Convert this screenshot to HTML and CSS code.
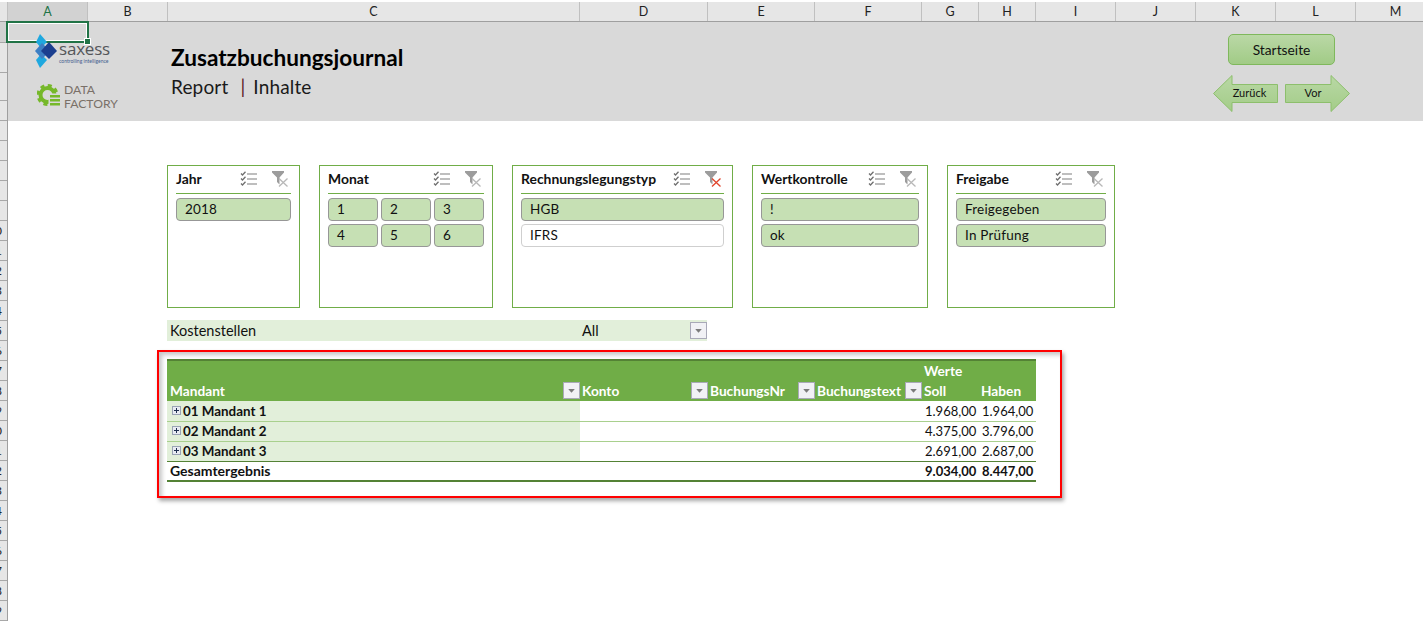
FILE: index.html
```html
<!DOCTYPE html>
<html lang="de">
<head>
    <meta charset="UTF-8">
    <meta name="viewport" content="width=device-width, initial-scale=1.0">
    <title>Zusatzbuchungsjournal</title>
    <link rel="stylesheet" href="styles.css">
</head>
<body>
    <svg class="defs" width="0" height="0">
        <defs>
            <linearGradient id="arrow-fill" x1="0" y1="0" x2="0" y2="1">
                <stop offset="0" stop-color="#b9d8a5"/>
                <stop offset="1" stop-color="#a3cc88"/>
            </linearGradient>
        </defs>
        <symbol id="icon-multi" viewBox="0 0 17 16">
            <path d="M1 2.500l1.500 1.500L5.500 .8M1 7.500l1.500 1.500 3-3.200M1 12.500l1.500 1.500 3-3.200" fill="none" stroke="#6f6f6f" stroke-width="1.300"/>
            <path d="M7 3h10M7 8h10M7 13h10" stroke="#7f7f7f" stroke-width="1.100"/>
        </symbol>
        <symbol id="icon-clear" viewBox="0 0 17 16">
            <path d="M0 0h12v1.500L7.500 6.500v7L5 11V6.500L0 1.500z" fill="#9c9c9c"/>
            <path d="M7 7.500l8.500 8M15.500 7.500L7 15.500" fill="none" stroke="currentColor" stroke-width="1.300"/>
        </symbol>
        <symbol id="icon-drop" viewBox="0 0 16 16">
            <path d="M4.500 6.500h7L8 10.500z" fill="#7b7b7b"/>
        </symbol>
    </svg>

    <div class="colheads">
        <div class="corner"></div>
        <div class="col col-a active">A</div>
        <div class="col col-b">B</div>
        <div class="col col-c">C</div>
        <div class="col col-d">D</div>
        <div class="col col-e">E</div>
        <div class="col col-f">F</div>
        <div class="col col-g">G</div>
        <div class="col col-g">H</div>
        <div class="col col-b">I</div>
        <div class="col col-b">J</div>
        <div class="col col-b">K</div>
        <div class="col col-b">L</div>
        <div class="col col-b">M</div>
    </div>

    <div class="sheet">
        <div class="rowheads">
            <div class="row row-1 active">1</div>
            <div class="row row-2">2</div>
            <div class="row row-3">3</div>
            <div class="row">4</div>
            <div class="row">5</div>
            <div class="row">6</div>
            <div class="row">7</div>
            <div class="row">8</div>
            <div class="row">9</div>
            <div class="row">10</div>
            <div class="row">11</div>
            <div class="row">12</div>
            <div class="row">13</div>
            <div class="row">14</div>
            <div class="row">15</div>
            <div class="row">16</div>
            <div class="row">17</div>
            <div class="row">18</div>
            <div class="row">19</div>
            <div class="row">20</div>
            <div class="row">21</div>
            <div class="row">22</div>
            <div class="row">23</div>
            <div class="row">24</div>
            <div class="row">25</div>
            <div class="row">26</div>
            <div class="row">27</div>
            <div class="row">28</div>
            <div class="row">29</div>
        </div>

        <main class="content">
            <header class="banner">
                <div class="selected-cell"></div>
                <div class="logos">
                    <div class="logo-saxess">
                        <svg width="23" height="34" viewBox="0 0 23 34">
                            <polygon points="5,0 12,8 6,14 1,8" fill="#1fa8df"/>
                            <polygon points="1,26 6,20 12,26 5,34" fill="#1fa8df"/>
                            <polygon points="0,17 7,9 15,17 7,25" fill="#3d7fc4"/>
                            <polygon points="6,17 14,8 22,17 14,25" fill="#1b3f8f"/>
                        </svg>
                        <div class="saxess-text">
                            <div class="saxess-name">saxess</div>
                            <div class="saxess-claim">controlling intelligence</div>
                        </div>
                    </div>
                    <div class="logo-factory">
                        <svg width="25" height="25" viewBox="0 0 25 25">
                            <circle cx="10.500" cy="12" r="7" fill="none" stroke="#76b82a" stroke-width="4"/>
                            <circle cx="10.500" cy="12" r="9.500" fill="none" stroke="#76b82a" stroke-width="3" stroke-dasharray="4 3.460"/>
                            <rect x="11.500" y="10.500" width="13.500" height="14.500" fill="#d9d9d9"/>
                            <path d="M13 12h10v2.500H13zM13 16h10v2.500H13zM13 20h10v2.500H13z" fill="#76b82a"/>
                        </svg>
                        <div class="factory-text">DATA<br>FACTORY</div>
                    </div>
                </div>
                <div class="headline">
                    <h1>Zusatzbuchungsjournal</h1>
                    <p>Report <span class="pipe">|</span> Inhalte</p>
                </div>
                <nav class="pager">
                    <a class="start-btn" href="#">Startseite</a>
                    <div class="arrows">
                        <svg class="arrow" width="65" height="37" viewBox="0 0 65 37">
                            <polygon points=".5,18.500 19,.5 19,9.500 64.500,9.500 64.500,27.500 19,27.500 19,36.500" class="arrow-shape"/>
                            <text x="36.500" y="22" class="arrow-label">Zurück</text>
                        </svg>
                        <svg class="arrow" width="65" height="37" viewBox="0 0 65 37">
                            <polygon points="64.500,18.500 46,.5 46,9.500 .5,9.500 .5,27.500 46,27.500 46,36.500" class="arrow-shape"/>
                            <text x="28" y="22" class="arrow-label">Vor</text>
                        </svg>
                    </div>
                </nav>
            </header>

            <section class="slicers">
                <div class="slicer slicer-jahr">
                    <div class="slicer-head">
                        <span class="slicer-title">Jahr</span>
                        <svg class="tool"><use href="#icon-multi"/></svg>
                        <svg class="tool tool-clear"><use href="#icon-clear"/></svg>
                    </div>
                    <div class="items">
                        <div class="item">2018</div>
                    </div>
                </div>
                <div class="slicer slicer-monat">
                    <div class="slicer-head">
                        <span class="slicer-title">Monat</span>
                        <svg class="tool"><use href="#icon-multi"/></svg>
                        <svg class="tool tool-clear"><use href="#icon-clear"/></svg>
                    </div>
                    <div class="items items-3">
                        <div class="item">1</div>
                        <div class="item">2</div>
                        <div class="item">3</div>
                        <div class="item">4</div>
                        <div class="item">5</div>
                        <div class="item">6</div>
                    </div>
                </div>
                <div class="slicer slicer-typ">
                    <div class="slicer-head">
                        <span class="slicer-title">Rechnungslegungstyp</span>
                        <svg class="tool"><use href="#icon-multi"/></svg>
                        <svg class="tool tool-clear on"><use href="#icon-clear"/></svg>
                    </div>
                    <div class="items">
                        <div class="item">HGB</div>
                        <div class="item off">IFRS</div>
                    </div>
                </div>
                <div class="slicer slicer-wert">
                    <div class="slicer-head">
                        <span class="slicer-title">Wertkontrolle</span>
                        <svg class="tool"><use href="#icon-multi"/></svg>
                        <svg class="tool tool-clear"><use href="#icon-clear"/></svg>
                    </div>
                    <div class="items">
                        <div class="item">!</div>
                        <div class="item">ok</div>
                    </div>
                </div>
                <div class="slicer slicer-frei">
                    <div class="slicer-head">
                        <span class="slicer-title">Freigabe</span>
                        <svg class="tool"><use href="#icon-multi"/></svg>
                        <svg class="tool tool-clear"><use href="#icon-clear"/></svg>
                    </div>
                    <div class="items">
                        <div class="item">Freigegeben</div>
                        <div class="item">In Prüfung</div>
                    </div>
                </div>
            </section>

            <div class="page-filter">
                <span class="filter-name">Kostenstellen</span>
                <span class="filter-value">All</span>
                <svg class="drop"><use href="#icon-drop"/></svg>
            </div>

            <div class="red-frame">
                <table class="pivot">
                    <colgroup>
                        <col class="c-mandant">
                        <col class="c-konto">
                        <col class="c-nr">
                        <col class="c-text">
                        <col class="c-num">
                        <col class="c-num">
                    </colgroup>
                    <thead>
                        <tr class="head-top">
                            <th></th><th></th><th></th><th></th>
                            <th colspan="2">Werte</th>
                        </tr>
                        <tr class="head-main">
                            <th class="first"><div class="th-in">Mandant<svg class="drop"><use href="#icon-drop"/></svg></div></th>
                            <th><div class="th-in">Konto<svg class="drop"><use href="#icon-drop"/></svg></div></th>
                            <th><div class="th-in">BuchungsNr<svg class="drop"><use href="#icon-drop"/></svg></div></th>
                            <th><div class="th-in">Buchungstext<svg class="drop"><use href="#icon-drop"/></svg></div></th>
                            <th>Soll</th>
                            <th>Haben</th>
                        </tr>
                    </thead>
                    <tbody>
                        <tr>
                            <td class="group"><span class="plus"></span>01 Mandant 1</td>
                            <td></td><td></td><td></td>
                            <td class="num">1.968,00</td><td class="num">1.964,00</td>
                        </tr>
                        <tr>
                            <td class="group"><span class="plus"></span>02 Mandant 2</td>
                            <td></td><td></td><td></td>
                            <td class="num">4.375,00</td><td class="num">3.796,00</td>
                        </tr>
                        <tr class="last">
                            <td class="group"><span class="plus"></span>03 Mandant 3</td>
                            <td></td><td></td><td></td>
                            <td class="num">2.691,00</td><td class="num">2.687,00</td>
                        </tr>
                        <tr class="total">
                            <td class="total-name">Gesamtergebnis</td>
                            <td></td><td></td><td></td>
                            <td class="num">9.034,00</td><td class="num">8.447,00</td>
                        </tr>
                    </tbody>
                </table>
            </div>
        </main>
    </div>
</body>
</html>
```

FILE: styles.css
```css
/* Sheet frame */
html, body {
    height: 100%;
}

body {
    margin: 0;
    overflow: hidden;
    background-color: #fff;
    color: #111;
    font-family: Lato, "Open Sans", sans-serif;
    font-size: 13px;
}

.defs {
    display: block;
    height: 0;
}

.colheads {
    display: flex;
    height: 19px;
    margin-top: 2px;
    background-color: #e6e6e6;
    border-bottom: 1px solid #9f9f9f;
}

.corner {
    flex: 0 0 8px;
    background-color: #e6e6e6;
    border-right: 1px solid #c0c0c0;
    box-sizing: border-box;
}

.col {
    flex: none;
    box-sizing: border-box;
    border-right: 1px solid #c0c0c0;
    text-align: center;
    line-height: 19px;
    font-size: 12.5px;
    color: #222;
}

.col.active {
    background-color: #d2d2d2;
    color: #217346;
}

.col-a, .col-b { width: 80px; }
.col-c { width: 412px; }
.col-d { width: 128px; }
.col-e, .col-f { width: 107px; }
.col-g { width: 57px; }

.sheet {
    display: flex;
    height: 600px;
}

.rowheads {
    flex: 0 0 8px;
    box-sizing: border-box;
    overflow: hidden;
    background-color: #e6e6e6;
    border-right: 1px solid #9f9f9f;
}

.row {
    box-sizing: border-box;
    width: 30px;
    height: 20px;
    margin-left: -20px;
    border-bottom: 1px solid #a8a8a8;
    text-align: center;
    line-height: 19px;
    font-size: 12px;
    color: #222;
}

.row.active { background-color: #d2d2d2; }
.row-1 { height: 21px; }
.row-2 { height: 30px; }
.row-3 { height: 28px; }

.content {
    flex: 1;
    min-width: 0;
}

/* Banner */
.banner {
    position: relative;
    display: flex;
    height: 99px;
    background-color: #d9d9d9;
}

.selected-cell {
    position: absolute;
    left: -2px;
    top: -1px;
    width: 79px;
    height: 18px;
    border: 2px solid #217346;
    outline: 1px solid #fff;
    outline-offset: -3px;
}

.selected-cell::after {
    content: "";
    position: absolute;
    right: -4px;
    bottom: -4px;
    width: 5px;
    height: 5px;
    background-color: #217346;
    border: 1px solid #fff;
}

.logos {
    position: relative;
    flex: 0 0 163px;
    padding: 12px 0 0 27px;
    box-sizing: border-box;
}

.logo-saxess {
    display: flex;
    gap: 1px;
}

.saxess-text {
    padding-top: 6px;
}

.saxess-name {
    font-family: "Open Sans", sans-serif;
    font-size: 17px;
    line-height: 17px;
    letter-spacing: -.2px;
    color: #54565a;
}

.saxess-claim {
    margin-top: 1px;
    font-size: 5px;
    line-height: 7px;
    color: #44608f;
    white-space: nowrap;
}

.logo-factory {
    display: flex;
    gap: 2px;
    margin: 15px 0 0 2px;
}

.factory-text {
    font-size: 12.200px;
    line-height: 14px;
    color: #7a7068;
}

.headline {
    padding-top: 23px;
}

h1 {
    margin: 0;
    font-size: 22.600px;
    line-height: 26px;
    font-weight: 700;
    color: #000;
}

.headline p {
    margin: 4px 0 0;
    font-size: 19px;
    line-height: 24px;
    letter-spacing: .15px;
    color: #1a1a1a;
}

.pipe {
    margin: 0 3px 0 7px;
    color: #5b1a24;
}

.pager {
    display: flex;
    flex-direction: column;
    align-items: center;
    margin-left: auto;
    margin-right: 73px;
    padding-top: 12px;
}

.start-btn {
    box-sizing: border-box;
    width: 107px;
    height: 31px;
    border: 1px solid #7fb85c;
    border-radius: 5px;
    background-image: linear-gradient(to bottom, #bad8a6, #a1cb86);
    color: #111;
    text-align: center;
    text-decoration: none;
    line-height: 29px;
    font-size: 13.800px;
}

.arrows {
    display: flex;
    gap: 7px;
    margin-top: 10px;
}

.arrow {
    display: block;
}

.arrow-shape {
    fill: url(#arrow-fill);
    stroke: #8dbf6c;
    stroke-width: 1;
}

.arrow-label {
    font-family: Lato, sans-serif;
    font-size: 11px;
    fill: #111;
    text-anchor: middle;
}

/* Slicers */
.slicers {
    display: flex;
    align-items: flex-start;
    margin: 44px 0 0 159px;
}

.slicer {
    box-sizing: border-box;
    height: 143px;
    padding: 0 8px;
    border: 1px solid #70ad47;
    background-color: #fff;
}

.slicer-jahr { width: 133px; margin-right: 19px; }
.slicer-monat { width: 174px; margin-right: 19px; }
.slicer-typ { width: 221px; margin-right: 19px; }
.slicer-wert { width: 176px; margin-right: 19px; }
.slicer-frei { width: 168px; }

.slicer-head {
    display: flex;
    align-items: center;
    box-sizing: border-box;
    height: 28px;
    padding-bottom: 2px;
    border-bottom: 1px solid #70ad47;
}

.slicer-title {
    flex: 1;
    font-weight: 700;
    font-size: 13.900px;
    color: #111;
    white-space: nowrap;
}

.tool {
    flex: none;
    width: 17px;
    height: 16px;
}

.tool-clear {
    margin: 0 2px 0 15px;
    color: #b8b8b8;
}

.tool-clear.on {
    color: #e0452c;
}

.items {
    display: grid;
    grid-template-columns: 1fr;
    gap: 3px;
    margin-top: 4px;
}

.items-3 {
    grid-template-columns: repeat(3, 1fr);
}

.item {
    box-sizing: border-box;
    height: 23px;
    padding-left: 8px;
    border: 1px solid #979797;
    border-radius: 4px;
    background-color: #c6e0b4;
    line-height: 21px;
    font-size: 13.500px;
    letter-spacing: .2px;
    color: #111;
}

.item.off {
    background-color: #fff;
    border-color: #cfcfcf;
}

/* Report filter */
.page-filter {
    display: flex;
    align-items: center;
    box-sizing: border-box;
    width: 540px;
    height: 21px;
    margin: 12px 0 0 159px;
    padding-left: 3px;
    background-color: #e2efda;
    font-size: 14.500px;
}

.filter-name {
    width: 412px;
}

.filter-value {
    flex: 1;
}

.drop {
    flex: none;
    box-sizing: border-box;
    width: 17px;
    height: 17px;
    border: 1px solid #a9a9b8;
    background-color: #f1f1f5;
}

/* Pivot table */
.red-frame {
    box-sizing: border-box;
    width: 905px;
    height: 148px;
    margin: 9px 0 0 149px;
    padding: 7px 8px;
    border: 2px solid #f00;
    box-shadow: 2px 3px 4px rgba(0, 0, 0, .35), inset 3px 3px 4px rgba(0, 0, 0, .22);
}

.pivot {
    table-layout: fixed;
    width: 869px;
    border-collapse: collapse;
    font-size: 13px;
}

.c-mandant { width: 413px; }
.c-konto { width: 128px; }
.c-nr, .c-text { width: 107px; }
.c-num { width: 57px; }

.pivot th {
    box-sizing: border-box;
    padding: 0 2px 2px;
    background-color: #70ad47;
    color: #fff;
    font-size: 13.700px;
    font-weight: 700;
    text-align: left;
    white-space: nowrap;
}

.pivot th.first {
    padding-left: 3px;
}

.head-top th {
    height: 21px;
    border-top: 2px solid #548235;
}

.head-main th {
    height: 20px;
    padding-right: 0;
}

.th-in {
    display: flex;
    align-items: center;
    justify-content: space-between;
    height: 18px;
}

.pivot td {
    box-sizing: border-box;
    height: 20px;
    padding: 0 3px;
    border-bottom: 1px solid #a9d08e;
    white-space: nowrap;
    color: #111;
}

.pivot td.group {
    padding-left: 5px;
    background-color: #e2efda;
    font-size: 13.400px;
    font-weight: 700;
}

.pivot td.num {
    text-align: right;
}

.pivot tr.last td {
    border-bottom-color: #548235;
}

.pivot tr.total td {
    border-bottom: 2px solid #548235;
    font-weight: 700;
}

.pivot td.total-name {
    font-size: 14px;
}

.plus {
    position: relative;
    display: inline-block;
    box-sizing: border-box;
    width: 9px;
    height: 9px;
    margin-right: 2px;
    border: 1px solid #9aa3b5;
    background-color: #e8ebf2;
    vertical-align: 1px;
}

.plus::before {
    content: "";
    position: absolute;
    left: 1px;
    top: 3px;
    width: 5px;
    height: 1px;
    background-color: #1e2f50;
}

.plus::after {
    content: "";
    position: absolute;
    left: 3px;
    top: 1px;
    width: 1px;
    height: 5px;
    background-color: #1e2f50;
}
```
